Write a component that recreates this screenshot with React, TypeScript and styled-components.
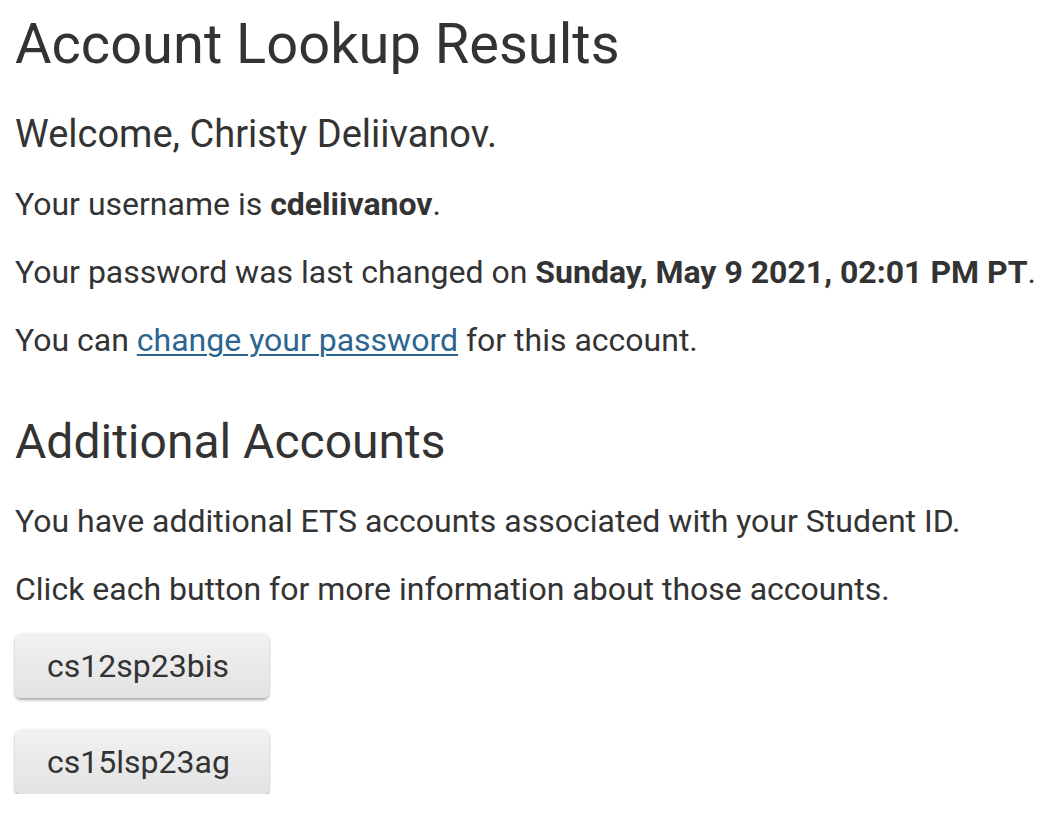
import React from "react";
import styled, { createGlobalStyle } from "styled-components";

const Global = createGlobalStyle`
  html, body { margin: 0; padding: 0; background: #fff; }
  body { font-family: Roboto, "Noto Sans", sans-serif; color: #333; }
`;

const Page = styled.main`
  display: flex;
  flex-direction: column;
  align-items: flex-start;
  padding: 0 15px;
`;

const Title = styled.h1`
  font-size: 56px;
  font-weight: 400;
  line-height: 66px;
  margin: 11px 0 34px;
`;

const Welcome = styled.h3`
  font-size: 38px;
  font-weight: 400;
  line-height: 46px;
  margin: 0 0 27px;
`;

const Section = styled.h2`
  font-size: 48px;
  font-weight: 400;
  line-height: 56px;
  margin: 26px 0 31px;
`;

const Text = styled.p`
  font-size: 32px;
  line-height: 40px;
  margin: 0 0 28px;
`;

const Link = styled.a`
  color: #2b6590;
  text-decoration: underline;
  text-decoration-thickness: 2px;
  text-underline-offset: 3px;
`;

const Buttons = styled.div`
  display: flex;
  flex-direction: column;
  gap: 31px;
  margin-top: -4px;
`;

const AccountButton = styled.button`
  font-family: Roboto, "Noto Sans", sans-serif;
  font-size: 32px;
  color: #333;
  width: 254px;
  height: 65px;
  padding: 0 0 0 32px;
  text-align: left;
  border: none;
  border-radius: 6px;
  background: linear-gradient(#f2f2f2, #e2e2e2);
  box-shadow: 0 2px 3px rgba(0, 0, 0, 0.35);
  cursor: pointer;
`;

export default function App() {
  return (
    <>
      <Global />
      <Page>
        <Title>Account Lookup Results</Title>
        <Welcome>Welcome, Christy Deliivanov.</Welcome>
        <Text>
          Your username is <b>cdeliivanov</b>.
        </Text>
        <Text>
          Your password was last changed on <b>Sunday, May 9 2021, 02:01 PM PT</b>.
        </Text>
        <Text>
          You can <Link href="#">change your password</Link> for this account.
        </Text>
        <Section>Additional Accounts</Section>
        <Text>You have additional ETS accounts associated with your Student ID.</Text>
        <Text>Click each button for more information about those accounts.</Text>
        <Buttons>
          <AccountButton>cs12sp23bis</AccountButton>
          <AccountButton>cs15lsp23ag</AccountButton>
        </Buttons>
      </Page>
    </>
  );
}
